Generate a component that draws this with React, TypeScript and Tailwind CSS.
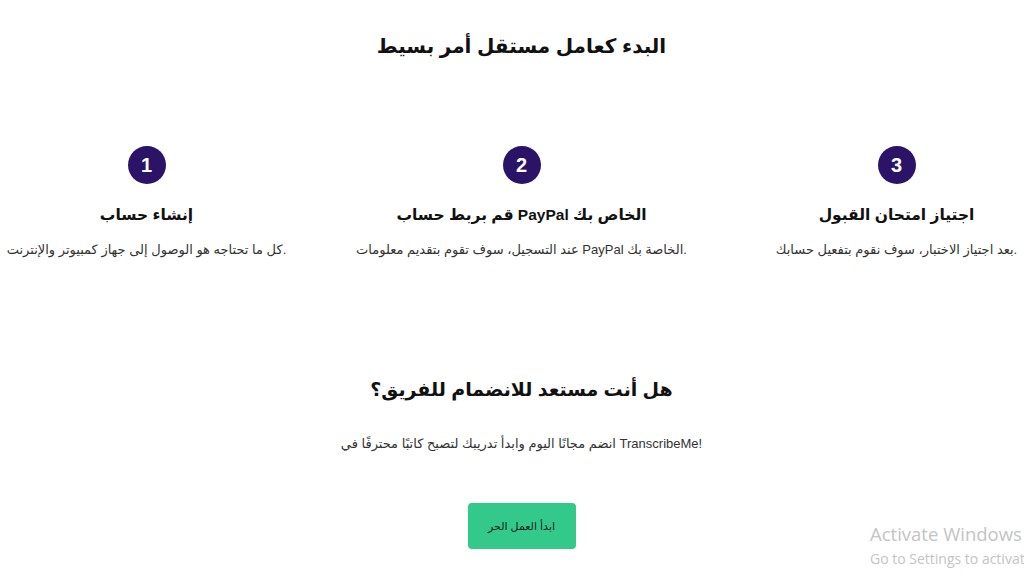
import React from 'react';

const heading = { fontFamily: '"Liberation Sans", "DejaVu Sans", sans-serif' };

const steps = [
  { n: '1', title: 'إنشاء حساب', desc: 'كل ما تحتاجه هو الوصول إلى جهاز كمبيوتر والإنترنت.' },
  { n: '2', title: 'قم بربط حساب PayPal الخاص بك', desc: 'عند التسجيل، سوف تقوم بتقديم معلومات PayPal الخاصة بك.' },
  { n: '3', title: 'اجتياز امتحان القبول', desc: 'بعد اجتياز الاختبار، سوف نقوم بتفعيل حسابك.' },
];

function Step({ n, title, desc }: { n: string; title: string; desc: string }) {
  return (
    <div className="flex w-[375px] shrink-0 flex-col items-center">
      <div className="flex h-[38px] w-[38px] items-center justify-center rounded-full bg-[#2b1467] text-[20px] font-bold text-white">
        {n}
      </div>
      <h3 style={heading} className="mt-[19px] whitespace-nowrap text-[15.5px] font-bold leading-[24px] text-[#111]">
        {title}
      </h3>
      <p className="mt-[13px] whitespace-nowrap text-[13px] leading-[20px] text-[#333]">{desc}</p>
    </div>
  );
}

export default function App() {
  return (
    <div
      className="relative h-[576px] w-[1024px] overflow-hidden bg-white"
      style={{ fontFamily: '"Liberation Sans", "DejaVu Sans", Arial, sans-serif' }}
    >
      <div className="flex w-[1043px] flex-col items-center">
        <h1 style={heading} className="mt-[28px] whitespace-nowrap text-[20px] font-bold leading-[36px] text-[#111]">
          البدء كعامل مستقل أمر بسيط
        </h1>

        <div className="mt-[82px] flex w-full justify-center">
          {steps.map((s) => (
            <Step key={s.n} {...s} />
          ))}
        </div>

        <h2 style={heading} className="mt-[113px] whitespace-nowrap text-[19px] font-bold leading-[34px] text-[#111]">
          هل أنت مستعد للانضمام للفريق؟
        </h2>
        <p className="mt-[27px] whitespace-nowrap text-[13px] leading-[20px] text-[#333]">
          انضم مجانًا اليوم وابدأ تدريبك لتصبح كاتبًا محترفًا في TranscribeMe!
        </p>

        <button className="mt-[49px] flex h-[46px] w-[108px] items-center justify-center rounded-[4px] bg-[#33c98a] text-[11px] text-[#1a1a1a]">
          ابدأ العمل الحر
        </button>
      </div>

      <div
        className="absolute left-[870px] top-[522px] whitespace-nowrap text-[#c4c4c4]"
        style={{ fontFamily: '"Open Sans", sans-serif' }}
      >
        <div className="text-[18.5px] leading-[24px]">Activate Windows</div>
        <div className="text-[14px] leading-[26px]">Go to Settings to activate Windows.</div>
      </div>
    </div>
  );
}
